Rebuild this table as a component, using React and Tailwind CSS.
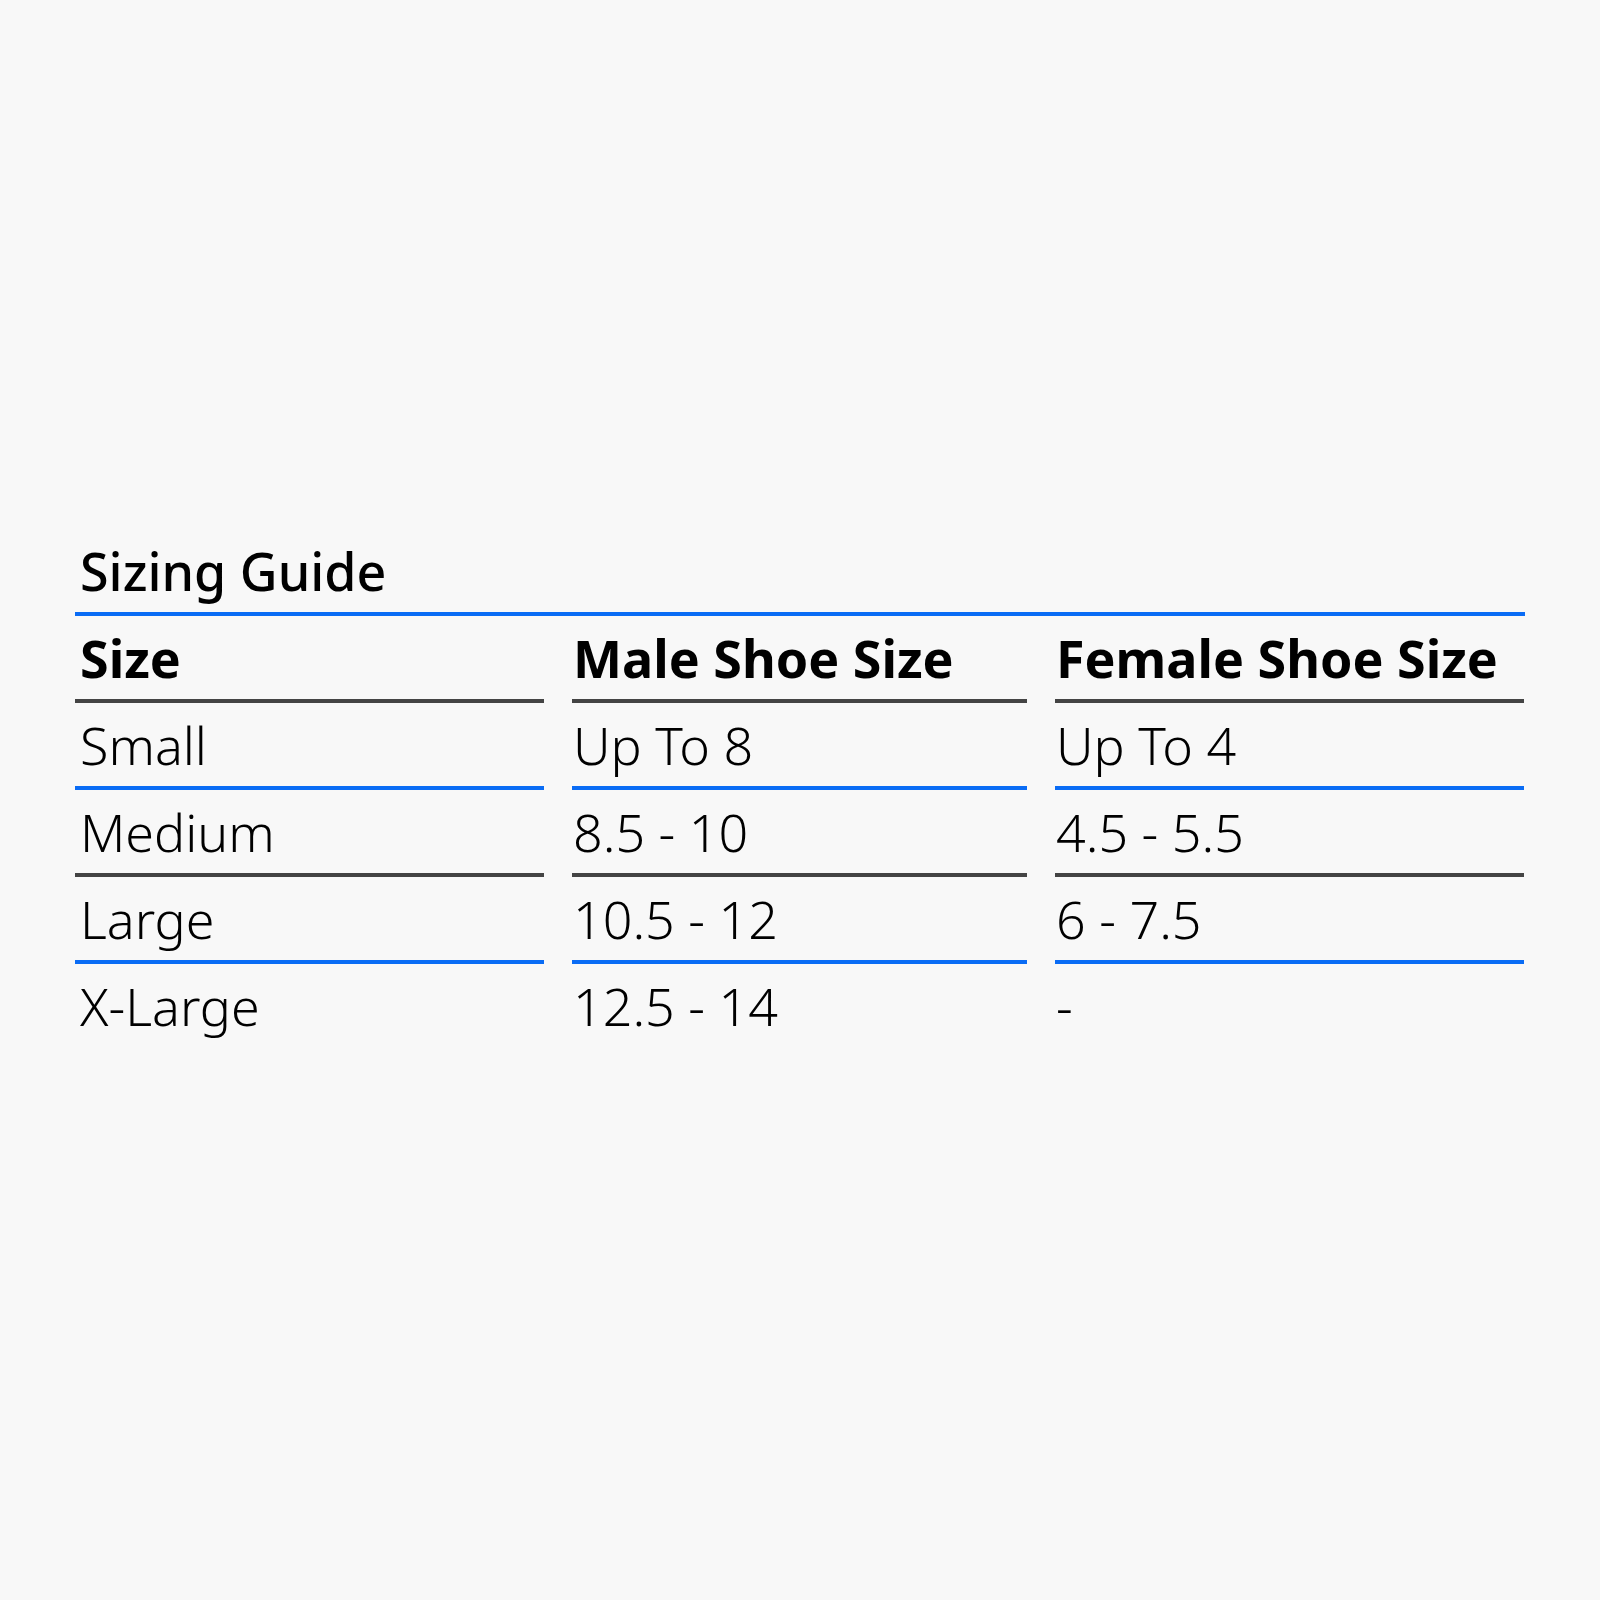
const rows = [
  { size: "Small", male: "Up To 8", female: "Up To 4" },
  { size: "Medium", male: "8.5 - 10", female: "4.5 - 5.5" },
  { size: "Large", male: "10.5 - 12", female: "6 - 7.5" },
  { size: "X-Large", male: "12.5 - 14", female: "-" },
];

// border colours alternate blue / dark between rows
const lineColors = ["border-[#0a6cf5]", "border-[#444444]"];

const Cell = ({ children, first, line, bold }) => (
  <div
    className={`h-[87px] leading-[84px] whitespace-nowrap ${first ? "pl-[5px]" : "pl-[1px]"} ${
      line ? `border-b-4 ${line}` : ""
    } ${bold ? "font-bold" : "font-light"}`}
  >
    {children}
  </div>
);

const App = () => {
  return (
    <div className="min-h-screen w-full bg-[#f8f8f8] text-black font-['Noto_Sans',sans-serif]">
      <div className="pt-[529px] px-[75px] w-[1600px]">
        <h2 className="text-[52px] leading-[83px] font-medium pl-[5px] border-b-4 border-[#0a6cf5]">
          Sizing Guide
        </h2>
        <div className="grid grid-cols-[469px_455px_469px] gap-x-[28px] text-[52px]">
          <Cell first bold line="border-[#444444]">Size</Cell>
          <Cell bold line="border-[#444444]">Male Shoe Size</Cell>
          <Cell bold line="border-[#444444]">Female Shoe Size</Cell>
          {rows.map((r, i) => {
            const line = i < rows.length - 1 ? lineColors[i % 2] : null;
            return [
              <Cell key={r.size + "a"} first line={line}>{r.size}</Cell>,
              <Cell key={r.size + "b"} line={line}>{r.male}</Cell>,
              <Cell key={r.size + "c"} line={line}>{r.female}</Cell>,
            ];
          })}
        </div>
      </div>
    </div>
  );
};

export default App;
